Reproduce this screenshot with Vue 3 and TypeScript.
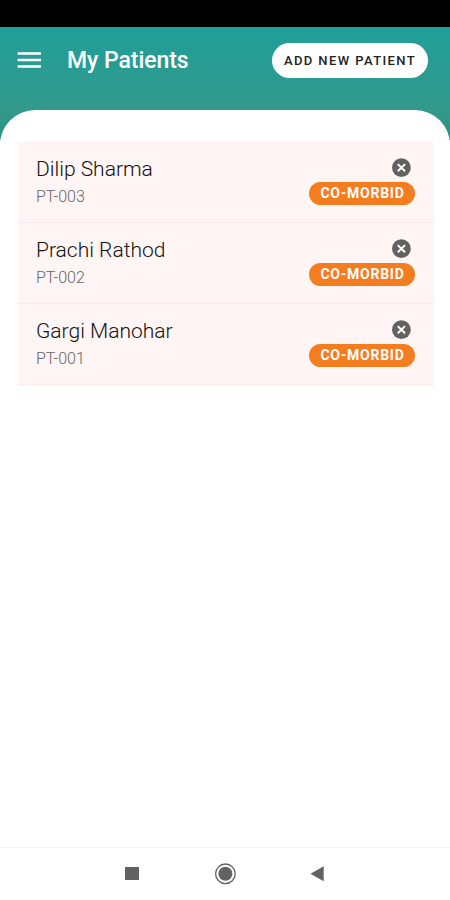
<script setup lang="ts">
interface Patient {
  id: string
  name: string
  tag: string
}

const patients: Patient[] = [
  { id: 'PT-003', name: 'Dilip Sharma', tag: 'CO-MORBID' },
  { id: 'PT-002', name: 'Prachi Rathod', tag: 'CO-MORBID' },
  { id: 'PT-001', name: 'Gargi Manohar', tag: 'CO-MORBID' },
]
</script>

<template>
  <div class="screen">
    <div class="status-bar"></div>
    <header class="app-bar">
      <button class="menu" aria-label="Menu">
        <svg width="24" height="18" viewBox="0 0 24 18">
          <path d="M0.6 2.5H24M0.6 9H24M0.6 15.5H24" stroke="#fff" stroke-width="2.5" />
        </svg>
      </button>
      <h1 class="title">My Patients</h1>
      <button class="add">ADD NEW PATIENT</button>
    </header>
    <main class="sheet">
      <ul class="list">
        <li v-for="p in patients" :key="p.id" class="row">
          <div class="info">
            <span class="name">{{ p.name }}</span>
            <span class="pid">{{ p.id }}</span>
          </div>
          <div class="side">
            <button class="remove" aria-label="Remove">
              <svg width="20" height="20" viewBox="0 0 20 20">
                <circle cx="10.4" cy="9.7" r="9.4" fill="#646161" />
                <path d="M6.8 6.1L14 13.3M14 6.1L6.8 13.3" stroke="#fff" stroke-width="2" />
              </svg>
            </button>
            <span class="tag">{{ p.tag }}</span>
          </div>
        </li>
      </ul>
    </main>
    <nav class="nav-bar">
      <svg width="14" height="14" viewBox="0 0 14 14"><rect width="14" height="13" fill="#626262" /></svg>
      <svg width="22" height="22" viewBox="0 0 22 22">
        <circle cx="11.4" cy="10.8" r="9.8" fill="none" stroke="#626262" stroke-width="1.3" />
        <circle cx="11.4" cy="10.8" r="7" fill="#626262" />
      </svg>
      <svg width="14" height="16" viewBox="0 0 14 16"><path d="M0.5 7.7L13.7 0.3V15.2Z" fill="#626262" /></svg>
    </nav>
  </div>
</template>

<style>
body {
  margin: 0;
  background: #fff;
}
</style>

<style scoped>
.screen {
  display: flex;
  flex-direction: column;
  width: 450px;
  height: 900px;
  overflow: hidden;
  background: #fff;
  font-family: Roboto, "Liberation Sans", sans-serif;
}
button {
  padding: 0;
  border: 0;
  background: none;
  font-family: inherit;
}
svg {
  display: block;
}
.status-bar {
  flex: none;
  height: 27px;
  background: #000;
}
.app-bar {
  display: flex;
  flex: none;
  align-items: flex-start;
  box-sizing: border-box;
  height: 113px;
  padding: 16px 22px 0 17px;
  background: linear-gradient(#1f9f99 0, #33998b 83px, #289184 113px);
}
.menu {
  margin-top: 8px;
}
.title {
  margin: 0 0 0 26px;
  color: #fff;
  font-size: 23px;
  font-weight: 500;
  line-height: 36px;
  letter-spacing: -0.05px;
  white-space: nowrap;
}
.add {
  width: 156px;
  height: 35px;
  margin-left: auto;
  border-radius: 18px;
  background: #fff;
  color: #222;
  font-size: 13px;
  font-weight: 500;
  line-height: 34px;
  letter-spacing: 1.4px;
  white-space: nowrap;
}
.sheet {
  flex: 1;
  margin-top: -30px;
  padding: 32px 16px 0 18px;
  border-radius: 35px 35px 0 0;
  background: #fff;
}
.list {
  margin: 0;
  padding: 0;
  list-style: none;
}
.row {
  display: flex;
  justify-content: space-between;
  box-sizing: border-box;
  height: 81px;
  padding: 14px 19px 0 18px;
  border-bottom: 1px solid #fce8e8;
  background: #fff5f4;
}
.info {
  display: flex;
  flex-direction: column;
}
.name {
  color: #111;
  font-size: 21px;
  font-weight: 300;
  line-height: 26px;
}
.pid {
  margin-top: 5px;
  color: #666;
  font-size: 16px;
  font-weight: 300;
  line-height: 20px;
}
.side {
  display: flex;
  flex-direction: column;
  align-items: flex-end;
}
.remove {
  margin: 2px 4px 0 0;
}
.tag {
  box-sizing: border-box;
  width: 106px;
  height: 23px;
  margin-top: 3.6px;
  padding-left: 1px;
  border-radius: 12px;
  background: #f47d20;
  color: #fff;
  font-size: 14px;
  font-weight: 700;
  line-height: 23px;
  letter-spacing: 0.75px;
  text-align: center;
}
.nav-bar {
  display: flex;
  flex: none;
  align-items: center;
  box-sizing: border-box;
  height: 53px;
  padding: 0 126px 0 125px;
  border-top: 1px solid #f3f3f3;
  justify-content: space-between;
}
</style>
